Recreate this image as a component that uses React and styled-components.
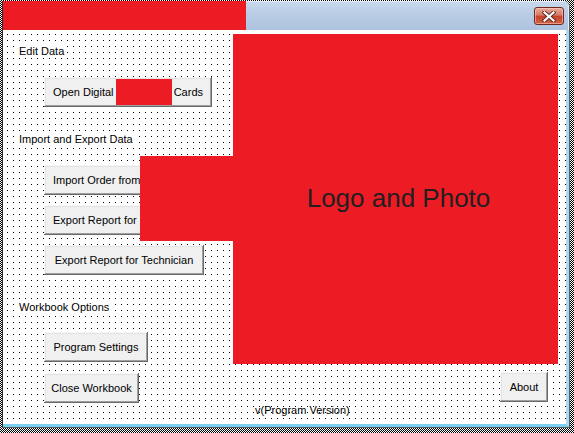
import React from 'react';
import styled, { createGlobalStyle } from 'styled-components';

const GlobalStyle = createGlobalStyle`
  *, *::before, *::after { box-sizing: border-box; }
  html, body { margin: 0; padding: 0; }
  body {
    width: 574px;
    height: 433px;
    overflow: hidden;
    font-family: "Liberation Sans", Arial, sans-serif;
    color: #000;
  }
`;

const RED = '#ed1c24';

const Selection = styled.div`
  width: 574px;
  height: 433px;
  padding: 1px 4px 5px 2px;
  display: flex;
  background: repeating-conic-gradient(#000 0 25%, #fff 0 50%) 0 0 / 2px 2px;
`;

const Window = styled.div`
  flex: 1;
  display: flex;
  flex-direction: column;
  border-left: 1px solid #2e2e2e;
  border-right: 1px solid #5b5b5b;
  border-bottom: 1px solid #5b5b5b;
  border-top-right-radius: 6px;
  overflow: hidden;
  background: #fff;
`;

const TitleBar = styled.div`
  height: 29px;
  display: flex;
  align-items: flex-start;
  background: linear-gradient(to bottom, #c9d9ec 0%, #b9cde6 45%, #adc3df 100%);
  box-shadow: inset -1px 1px 0 #e4edf7;
`;

const TitleRedaction = styled.div`
  width: 243px;
  height: 100%;
  background: ${RED};
`;

const CloseButton = styled.div`
  margin: 6px 5px 0 auto;
  width: 30px;
  height: 18px;
  border: 1px solid #6e2a1f;
  border-radius: 3px;
  display: flex;
  align-items: center;
  justify-content: center;
  background: linear-gradient(to bottom, #e9a99a 0%, #d67a66 45%, #c2442c 50%, #d4603f 100%);
  box-shadow: inset 0 0 0 1px rgba(255, 220, 210, 0.5);
`;

const Body = styled.div`
  flex: 1;
  position: relative;
  display: flex;
  flex-direction: column;
  background-color: #fff;
  background-image: radial-gradient(circle at 0.5px 0.5px, #000 0.6px, transparent 0.7px);
  background-size: 6px 6px;
  background-position: 4px 4px;
  border-right: 3px solid #a9dcf2;
  border-bottom: 3px solid #7ccfee;
`;

const Main = styled.div`
  display: flex;
`;

const LeftCol = styled.div`
  width: 230px;
  padding-left: 16px;
  display: flex;
  flex-direction: column;
  align-items: flex-start;
`;

const RightCol = styled.div`
  width: 333px;
  display: flex;
  flex-direction: column;
`;

const SectionLabel = styled.div`
  margin-top: ${(p) => p.$top}px;
  font-size: 11px;
  line-height: 13px;
  background: #fff;
  padding-right: 2px;
`;

const Button = styled.button`
  margin-top: ${(p) => p.$top}px;
  margin-left: ${(p) => (p.$left === undefined ? 25 : p.$left)}px;
  width: ${(p) => (p.$width ? `${p.$width}px` : 'auto')};
  height: 30px;
  padding: 0 9px;
  border: none;
  background: #f0f0f0;
  box-shadow: inset -1px -1px 0 #696969, inset 1px 1px 0 #f8f8f8,
    inset -2px -2px 0 #a0a0a0, inset 2px 2px 0 #e3e3e3;
  font-family: "Liberation Sans", Arial, sans-serif;
  font-size: 11px;
  color: #000;
  display: flex;
  align-items: center;
  justify-content: center;
  white-space: nowrap;
`;

const InlineRedaction = styled.span`
  display: inline-block;
  width: 61px;
  height: 26px;
  margin: 0 2px;
  background: ${RED};
`;

const Logo = styled.div`
  margin-top: 4px;
  width: 325px;
  height: 330px;
  background: ${RED};
  display: flex;
  align-items: center;
  justify-content: center;
  font-size: 26px;
  color: #231f20;
  padding-bottom: 2px;
  padding-left: 6px;
`;

const Overlay = styled.div`
  position: absolute;
  left: 137px;
  top: 126px;
  width: 96px;
  height: 85px;
  background: ${RED};
`;

const Footer = styled.div`
  margin-top: 1px;
  padding-left: 252px;
  font-size: 11px;
  line-height: 13px;
`;

const CloseIcon = () => (
  <svg width="14" height="11" viewBox="0 0 14 11">
    <path d="M2.5 1.5 L11.5 9.5 M11.5 1.5 L2.5 9.5" stroke="#5a2a22" strokeWidth="4" strokeLinecap="square" />
    <path d="M2.5 1.5 L11.5 9.5 M11.5 1.5 L2.5 9.5" stroke="#fff" strokeWidth="2.2" strokeLinecap="square" />
  </svg>
);

export default function App() {
  return (
    <>
      <GlobalStyle />
      <Selection>
        <Window>
          <TitleBar>
            <TitleRedaction />
            <CloseButton>
              <CloseIcon />
            </CloseButton>
          </TitleBar>
          <Body>
            <Main>
              <LeftCol>
                <SectionLabel $top={15}>Edit Data</SectionLabel>
                <Button $top={19} $width={168}>
                  Open Digital<InlineRedaction />Cards
                </Button>
                <SectionLabel $top={26}>Import and Export Data</SectionLabel>
                <Button $top={19}>Import Order from Dispatch</Button>
                <Button $top={10}>Export Report for Dispatch</Button>
                <Button $top={10} $width={160}>Export Report for Technician</Button>
                <SectionLabel $top={26}>Workbook Options</SectionLabel>
                <Button $top={18} $width={104}>Program Settings</Button>
                <Button $top={11} $width={95}>Close Workbook</Button>
              </LeftCol>
              <RightCol>
                <Logo>Logo and Photo</Logo>
                <Button $top={8} $left={267} $width={48}>About</Button>
              </RightCol>
            </Main>
            <Footer>v(Program Version)</Footer>
            <Overlay />
          </Body>
        </Window>
      </Selection>
    </>
  );
}
